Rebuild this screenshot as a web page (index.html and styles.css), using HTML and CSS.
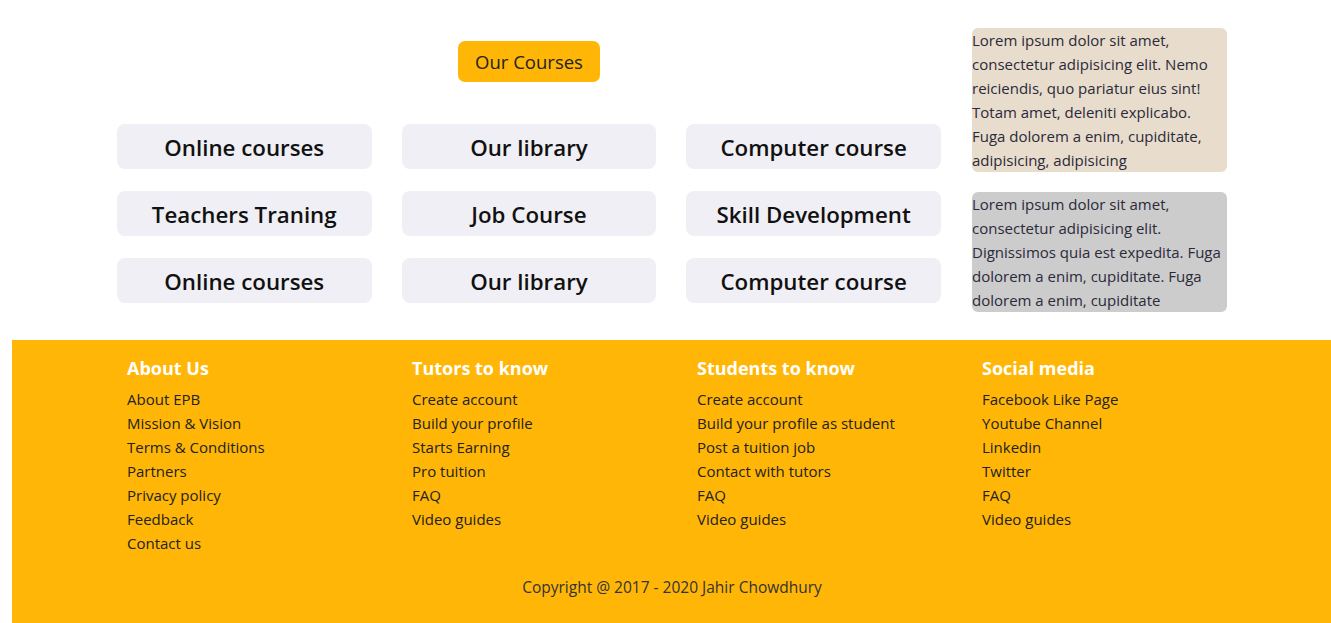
FILE: index.html
```html
<!DOCTYPE html>
<html lang="en">
<head>
<meta charset="utf-8">
<title>Our Courses</title>
<link rel="stylesheet" href="styles.css">
</head>
<body>
<main class="page">
  <section class="courses">
    <div class="title-row"><span class="title-btn">Our Courses</span></div>
    <div class="course-grid">
      <div class="course">Online courses</div>
      <div class="course">Our library</div>
      <div class="course">Computer course</div>
      <div class="course">Teachers Traning</div>
      <div class="course">Job Course</div>
      <div class="course">Skill Development</div>
      <div class="course">Online courses</div>
      <div class="course">Our library</div>
      <div class="course">Computer course</div>
    </div>
  </section>
  <aside class="side">
    <p class="note note-beige">Lorem ipsum dolor sit amet, consectetur adipisicing elit. Nemo reiciendis, quo pariatur eius sint! Totam amet, deleniti explicabo. Fuga dolorem a enim, cupiditate, adipisicing, adipisicing</p>
    <p class="note note-grey">Lorem ipsum dolor sit amet, consectetur adipisicing elit. Dignissimos quia est expedita. Fuga dolorem a enim, cupiditate. Fuga dolorem a enim, cupiditate</p>
  </aside>
</main>
<footer class="footer">
  <div class="footer-inner">
    <div class="footer-cols">
      <div class="fcol">
        <h3>About Us</h3>
        <ul>
          <li>About EPB</li>
          <li>Mission &amp; Vision</li>
          <li>Terms &amp; Conditions</li>
          <li>Partners</li>
          <li>Privacy policy</li>
          <li>Feedback</li>
          <li>Contact us</li>
        </ul>
      </div>
      <div class="fcol">
        <h3>Tutors to know</h3>
        <ul>
          <li>Create account</li>
          <li>Build your profile</li>
          <li>Starts Earning</li>
          <li>Pro tuition</li>
          <li>FAQ</li>
          <li>Video guides</li>
        </ul>
      </div>
      <div class="fcol">
        <h3>Students to know</h3>
        <ul>
          <li>Create account</li>
          <li>Build your profile as student</li>
          <li>Post a tuition job</li>
          <li>Contact with tutors</li>
          <li>FAQ</li>
          <li>Video guides</li>
        </ul>
      </div>
      <div class="fcol">
        <h3>Social media</h3>
        <ul>
          <li>Facebook Like Page</li>
          <li>Youtube Channel</li>
          <li>Linkedin</li>
          <li>Twitter</li>
          <li>FAQ</li>
          <li>Video guides</li>
        </ul>
      </div>
    </div>
    <p class="copyright">Copyright @ 2017 - 2020 Jahir Chowdhury</p>
  </div>
</footer>
</body>
</html>
```

FILE: styles.css
```css
* { box-sizing: border-box; }

html, body {
  margin: 0;
  padding: 0;
  overflow: hidden;
}

body {
  font-family: "Open Sans", "Noto Sans", sans-serif;
  color: #212529;
  background: #fff;
}

.page {
  width: 1140px;
  margin-left: 102px;
  display: flex;
  padding-top: 28px;
}

.courses {
  width: 855px;
  padding-left: 15px;
}

.title-row {
  display: flex;
  justify-content: center;
  padding-top: 13px;
  width: 824px;
}

.title-btn {
  display: inline-block;
  width: 142px;
  height: 41px;
  line-height: 41px;
  text-align: center;
  background: #ffb606;
  border-radius: 7px;
  font-size: 18.5px;
  color: #222;
}

.course-grid {
  display: grid;
  grid-template-columns: repeat(3, 254.5px);
  column-gap: 30.2px;
  row-gap: 22px;
  margin-top: 42px;
}

.course {
  height: 45px;
  padding-top: 2px;
  background: #f0eff5;
  border-radius: 8px;
  display: flex;
  align-items: center;
  justify-content: center;
  font-size: 22.3px;
  font-weight: 600;
  color: #111;
}

.side {
  width: 285px;
  padding-left: 15px;
  padding-right: 15px;
  display: flex;
  flex-direction: column;
  gap: 20px;
}

.note {
  margin: 0;
  font-size: 15px;
  line-height: 24px;
  border-radius: 6px;
  color: #2a2a3a;
}

.note-beige { background: #e8dccc; }
.note-grey { background: #cccccc; }

.footer {
  margin-top: 28px;
  margin-left: 12px;
  width: 1319px;
  background: #ffb606;
  padding: 16px 0 30px;
}

.footer-inner {
  width: 1140px;
  margin-left: 90px;
}

.footer-cols {
  display: grid;
  grid-template-columns: repeat(4, 285px);
}

.fcol {
  padding-left: 25px;
}

.fcol h3 {
  margin: 0 0 7px;
  font-size: 18px;
  line-height: 24px;
  font-weight: 700;
  color: #fff;
}

.fcol ul {
  list-style: none;
  margin: 0;
  padding: 0;
}

.fcol li {
  font-size: 15px;
  line-height: 24px;
  color: #222;
}

.copyright {
  margin: 20px 0 0;
  text-align: center;
  font-size: 15.5px;
  line-height: 24px;
  color: #333;
}
```
